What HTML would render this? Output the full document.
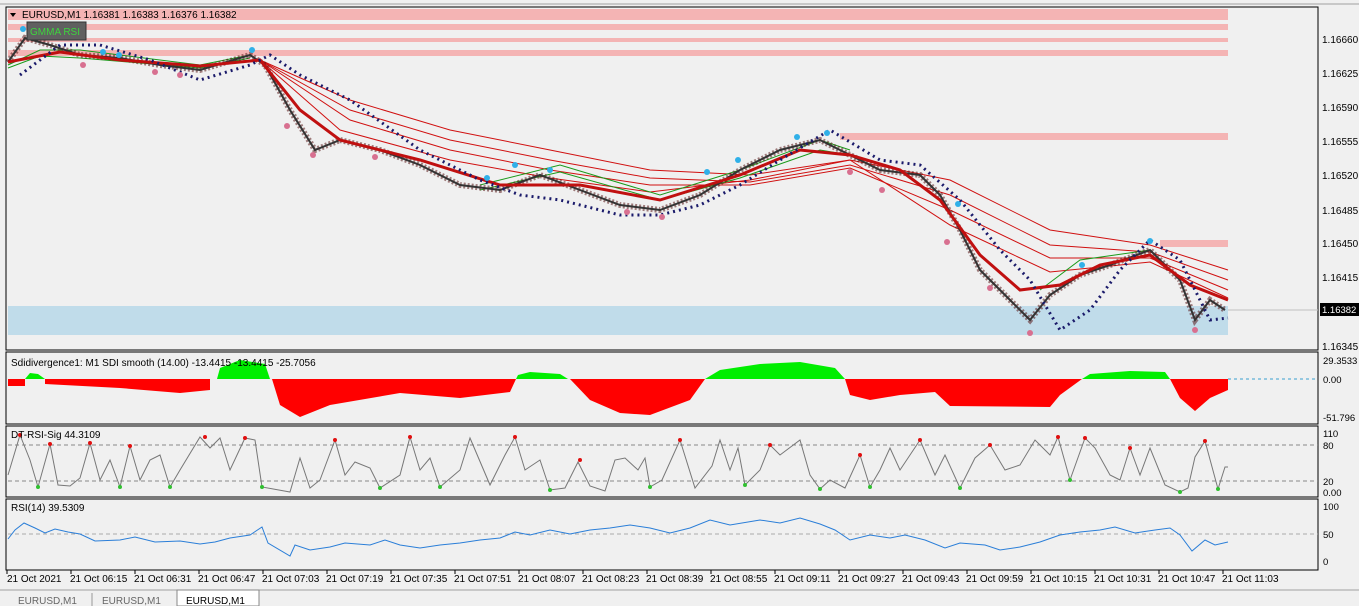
<!DOCTYPE html>
<html><head><meta charset="utf-8"><style>
body{margin:0;width:1359px;height:606px;overflow:hidden;background:#f0f0f0;font-family:"Liberation Sans",sans-serif}
svg{position:absolute;left:0;top:0}
text{font-family:"Liberation Sans",sans-serif;font-size:10px;fill:#000}
</style></head><body>
<svg width="1359" height="606" viewBox="0 0 1359 606">
<rect x="0" y="0" width="1359" height="606" fill="#f0f0f0"/>
<line x1="0" y1="4" x2="1359" y2="4" stroke="#a0a0a0"/>
<!-- main pane -->
<rect x="6" y="7" width="1312" height="343" fill="#f0f0f0" stroke="#000"/>
<rect x="8" y="9" width="1220" height="11" fill="#f4b4b4"/>
<rect x="8" y="24" width="1220" height="6" fill="#f4b4b4"/>
<rect x="8" y="38" width="1220" height="4" fill="#f4b4b4"/>
<rect x="8" y="50" width="1220" height="6" fill="#f4b4b4"/>
<rect x="840" y="133" width="388" height="7" fill="#f4b4b4"/>
<rect x="1160" y="240" width="68" height="7" fill="#f4b4b4"/>
<rect x="8" y="306" width="1220" height="29" fill="#c0dcea"/>
<line x1="1228" y1="310" x2="1318" y2="310" stroke="#c0c0c0"/>
<!-- band lines -->
<g fill="none" stroke="#d01010" stroke-width="1">
<polyline points="260,60 350,100 450,130 550,150 650,170 750,175 850,160 950,180 1050,230 1150,245 1228,270"/>
<polyline points="260,60 350,110 450,140 550,160 650,178 750,182 850,165 950,195 1050,245 1150,252 1228,280"/>
<polyline points="260,60 350,120 450,150 550,170 650,185 750,185 850,168 950,210 1050,258 1150,258 1228,290"/>
<polyline points="260,60 340,130 450,160 550,178 650,192 750,180 850,160 950,225 1050,272 1150,262 1228,298"/>
</g>
<g fill="none" stroke="#1a9a1a" stroke-width="1">
<polyline points="8,65 40,50 80,50 200,65 250,55"/>
<polyline points="8,68 40,56 80,58 200,68 250,58"/>
<polyline points="480,185 560,165 660,195 740,170 820,140 850,150"/>
<polyline points="480,190 560,172 660,200 740,178 820,150 850,155"/>
<polyline points="1040,290 1080,260 1150,250"/>
</g>
<polyline fill="none" stroke="#5a1a1a" stroke-width="6" stroke-dasharray="2,2" opacity="0.55" points="8,62 25,38 50,45 80,55 120,58 160,65 200,70 250,55 265,65 290,110 315,150 340,140 380,150 420,165 460,185 500,190 540,175 580,190 620,205 660,210 700,195 740,170 780,150 820,140 850,155 880,170 920,175 940,195 960,230 980,270 1010,300 1030,320 1050,295 1080,275 1110,265 1150,250 1180,280 1195,320 1210,300 1225,310"/>
<polyline fill="none" stroke="#333" stroke-width="2" points="8,62 25,38 50,45 80,55 120,58 160,65 200,70 250,55 265,65 290,110 315,150 340,140 380,150 420,165 460,185 500,190 540,175 580,190 620,205 660,210 700,195 740,170 780,150 820,140 850,155 880,170 920,175 940,195 960,230 980,270 1010,300 1030,320 1050,295 1080,275 1110,265 1150,250 1180,280 1195,320 1210,300 1225,310"/>
<polyline fill="none" stroke="#c01010" stroke-width="3" points="8,62 60,52 120,60 200,66 260,60 300,110 340,140 420,160 500,185 580,185 660,200 740,175 800,150 850,155 900,170 940,200 980,255 1020,290 1060,285 1100,265 1150,255 1190,285 1228,300"/>
<polyline fill="none" stroke="#1a1a6a" stroke-width="3" stroke-dasharray="2,4" points="20,75 60,45 100,45 150,60 200,80 250,65 270,55 300,75 350,100 420,150 480,180 520,195 560,200 620,215 660,215 700,205 740,185 780,160 830,130 880,160 920,165 960,200 1000,250 1030,280 1060,330 1090,310 1120,270 1150,240 1180,260 1210,320 1228,318"/>
<g fill="#30b0e8"><circle cx="23" cy="29" r="3"/><circle cx="103" cy="52" r="3"/><circle cx="119" cy="55" r="3"/><circle cx="252" cy="50" r="3"/><circle cx="487" cy="178" r="3"/><circle cx="515" cy="165" r="3"/><circle cx="550" cy="170" r="3"/><circle cx="707" cy="172" r="3"/><circle cx="738" cy="160" r="3"/><circle cx="797" cy="137" r="3"/><circle cx="827" cy="133" r="3"/><circle cx="958" cy="204" r="3"/><circle cx="1082" cy="265" r="3"/><circle cx="1150" cy="241" r="3"/></g>
<g fill="#d87090"><circle cx="83" cy="65" r="3"/><circle cx="155" cy="72" r="3"/><circle cx="180" cy="75" r="3"/><circle cx="287" cy="126" r="3"/><circle cx="313" cy="155" r="3"/><circle cx="375" cy="157" r="3"/><circle cx="627" cy="212" r="3"/><circle cx="662" cy="217" r="3"/><circle cx="850" cy="172" r="3"/><circle cx="882" cy="190" r="3"/><circle cx="947" cy="242" r="3"/><circle cx="990" cy="288" r="3"/><circle cx="1030" cy="333" r="3"/><circle cx="1195" cy="330" r="3"/></g>
<polygon points="10,13 16,13 13,17" fill="#000"/>
<text x="22" y="18" font-size="10">EURUSD,M1  1.16381 1.16383 1.16376 1.16382</text>
<rect x="27" y="22" width="59" height="18" fill="#606060" stroke="#333"/>
<text x="30" y="35" font-size="11" style="fill:#3ed43e">GMMA RSI</text>
<!-- price axis -->
<g style="font-size:9.5px">
<text x="1322" y="43">1.16660</text><text x="1322" y="77">1.16625</text><text x="1322" y="111">1.16590</text><text x="1322" y="145">1.16555</text><text x="1322" y="179">1.16520</text><text x="1322" y="214">1.16485</text><text x="1322" y="247">1.16450</text><text x="1322" y="281">1.16415</text><text x="1322" y="350">1.16345</text>
</g>
<rect x="1320" y="303" width="39" height="13" fill="#000"/>
<text x="1322" y="313" style="fill:#fff;font-size:9.5px">1.16382</text>
<!-- SDI pane -->
<rect x="6" y="352" width="1312" height="72" fill="#f0f0f0" stroke="#000"/>
<line x1="1228" y1="379" x2="1318" y2="379" stroke="#3aa0d0" stroke-dasharray="3,3"/>
<g fill="#ff0000">
<polygon points="8,379 25,379 25,386 8,386"/>
<polygon points="45,379 210,379 210,390 180,393 120,388 45,384"/>
<polygon points="272,379 516,379 510,392 460,398 400,393 330,405 300,417 280,405"/>
<polygon points="570,379 705,379 690,400 650,415 620,413 590,400"/>
<polygon points="845,379 1082,379 1060,395 1050,407 950,406 935,392 900,395 870,400 850,395"/>
<polygon points="1170,379 1228,379 1228,390 1210,398 1195,411 1180,398"/>
</g>
<g fill="#00ee00">
<polygon points="25,379 45,379 38,374 30,373"/>
<polygon points="217,379 270,379 265,364 240,360 220,368"/>
<polygon points="516,379 568,379 560,374 530,372 518,375"/>
<polygon points="705,379 845,379 835,368 800,362 760,364 720,370"/>
<polygon points="1082,379 1170,379 1165,372 1130,371 1090,374"/>
</g>
<text x="11" y="366">Sdidivergence1:  M1   SDI smooth (14.00) -13.4415 -13.4415 -25.7056</text>
<text x="1323" y="364" style="font-size:9.5px">29.3533</text><text x="1323" y="383" style="font-size:9.5px">0.00</text><text x="1323" y="421" style="font-size:9.5px">-51.796</text>
<!-- DT RSI -->
<rect x="6" y="426" width="1312" height="71" fill="#f0f0f0" stroke="#000"/>
<line x1="8" y1="445" x2="1318" y2="445" stroke="#888" stroke-dasharray="4,3"/>
<line x1="8" y1="481" x2="1318" y2="481" stroke="#888" stroke-dasharray="4,3"/>
<polyline fill="none" stroke="#777" points="8,475 20,435 30,460 38,487 50,444 58,485 70,486 80,478 90,443 100,480 110,460 120,487 130,446 140,480 150,460 160,455 170,487 180,470 200,437 210,448 220,438 230,470 245,438 255,440 262,487 290,492 300,458 310,488 320,480 335,440 345,475 355,462 370,468 380,488 400,475 410,437 420,470 430,458 440,487 460,470 470,438 490,485 505,455 515,437 525,470 540,460 550,490 565,488 578,462 590,486 605,491 615,460 625,458 638,470 645,458 650,487 662,480 680,440 695,488 712,466 720,440 730,470 738,448 745,485 760,470 770,445 780,455 800,440 810,475 820,489 830,480 845,488 860,455 870,487 880,470 890,448 900,470 920,440 935,475 945,455 960,488 975,458 990,445 1005,470 1020,465 1035,440 1050,455 1058,437 1070,480 1085,438 1095,448 1110,475 1120,480 1130,448 1140,475 1150,448 1165,485 1180,492 1188,488 1195,457 1205,441 1218,489 1225,467 1228,467"/>
<g fill="#e01010"><circle cx="20" cy="435" r="2"/><circle cx="50" cy="444" r="2"/><circle cx="90" cy="443" r="2"/><circle cx="130" cy="446" r="2"/><circle cx="205" cy="437" r="2"/><circle cx="245" cy="438" r="2"/><circle cx="335" cy="440" r="2"/><circle cx="410" cy="437" r="2"/><circle cx="515" cy="437" r="2"/><circle cx="580" cy="460" r="2"/><circle cx="680" cy="440" r="2"/><circle cx="770" cy="445" r="2"/><circle cx="860" cy="455" r="2"/><circle cx="920" cy="440" r="2"/><circle cx="990" cy="445" r="2"/><circle cx="1058" cy="437" r="2"/><circle cx="1085" cy="438" r="2"/><circle cx="1130" cy="448" r="2"/><circle cx="1205" cy="441" r="2"/></g>
<g fill="#30c030"><circle cx="38" cy="487" r="2"/><circle cx="120" cy="487" r="2"/><circle cx="170" cy="487" r="2"/><circle cx="262" cy="487" r="2"/><circle cx="380" cy="488" r="2"/><circle cx="440" cy="487" r="2"/><circle cx="550" cy="490" r="2"/><circle cx="650" cy="487" r="2"/><circle cx="745" cy="485" r="2"/><circle cx="820" cy="489" r="2"/><circle cx="870" cy="487" r="2"/><circle cx="960" cy="488" r="2"/><circle cx="1070" cy="480" r="2"/><circle cx="1180" cy="492" r="2"/><circle cx="1218" cy="489" r="2"/></g>
<text x="11" y="438">DT-RSI-Sig 44.3109</text>
<text x="1323" y="437" style="font-size:9.5px">110</text><text x="1323" y="449" style="font-size:9.5px">80</text><text x="1323" y="485" style="font-size:9.5px">20</text><text x="1323" y="496" style="font-size:9.5px">0.00</text>
<!-- RSI -->
<rect x="6" y="499" width="1312" height="71" fill="#f0f0f0" stroke="#000"/>
<line x1="8" y1="534" x2="1318" y2="534" stroke="#aaa" stroke-dasharray="4,3"/>
<polyline fill="none" stroke="#2a7ed8" points="8,539 15,530 24,523 35,528 45,533 55,529 68,532 80,534 95,541 120,540 135,537 155,542 180,541 200,544 215,542 230,538 250,535 262,527 268,543 290,556 295,545 310,550 330,547 345,543 370,545 385,540 400,545 420,548 440,545 460,543 480,540 500,538 515,532 530,535 550,530 570,534 590,530 610,528 630,525 650,528 670,533 690,528 710,520 730,525 760,520 780,523 800,518 820,524 835,530 850,540 870,535 890,538 905,535 925,540 945,548 960,543 985,545 1000,550 1020,547 1040,542 1060,535 1080,532 1100,530 1115,527 1135,533 1155,530 1170,528 1180,535 1192,551 1205,540 1215,545 1228,542"/>
<text x="11" y="511">RSI(14) 39.5309</text>
<text x="1323" y="510" style="font-size:9.5px">100</text><text x="1323" y="538" style="font-size:9.5px">50</text><text x="1323" y="565" style="font-size:9.5px">0</text>
<!-- time axis -->
<g stroke="#000"><line x1="7" y1="570" x2="7" y2="574"/><line x1="71" y1="570" x2="71" y2="574"/><line x1="135" y1="570" x2="135" y2="574"/><line x1="199" y1="570" x2="199" y2="574"/><line x1="263" y1="570" x2="263" y2="574"/><line x1="327" y1="570" x2="327" y2="574"/><line x1="391" y1="570" x2="391" y2="574"/><line x1="455" y1="570" x2="455" y2="574"/><line x1="519" y1="570" x2="519" y2="574"/><line x1="583" y1="570" x2="583" y2="574"/><line x1="647" y1="570" x2="647" y2="574"/><line x1="711" y1="570" x2="711" y2="574"/><line x1="775" y1="570" x2="775" y2="574"/><line x1="839" y1="570" x2="839" y2="574"/><line x1="903" y1="570" x2="903" y2="574"/><line x1="967" y1="570" x2="967" y2="574"/><line x1="1031" y1="570" x2="1031" y2="574"/><line x1="1095" y1="570" x2="1095" y2="574"/><line x1="1159" y1="570" x2="1159" y2="574"/><line x1="1223" y1="570" x2="1223" y2="574"/></g>
<g font-size="10">
<text x="7" y="582">21 Oct 2021</text><text x="70" y="582">21 Oct 06:15</text><text x="134" y="582">21 Oct 06:31</text><text x="198" y="582">21 Oct 06:47</text><text x="262" y="582">21 Oct 07:03</text><text x="326" y="582">21 Oct 07:19</text><text x="390" y="582">21 Oct 07:35</text><text x="454" y="582">21 Oct 07:51</text><text x="518" y="582">21 Oct 08:07</text><text x="582" y="582">21 Oct 08:23</text><text x="646" y="582">21 Oct 08:39</text><text x="710" y="582">21 Oct 08:55</text><text x="774" y="582">21 Oct 09:11</text><text x="838" y="582">21 Oct 09:27</text><text x="902" y="582">21 Oct 09:43</text><text x="966" y="582">21 Oct 09:59</text><text x="1030" y="582">21 Oct 10:15</text><text x="1094" y="582">21 Oct 10:31</text><text x="1158" y="582">21 Oct 10:47</text><text x="1222" y="582">21 Oct 11:03</text>
</g>
<!-- tabs -->
<line x1="0" y1="590" x2="1359" y2="590" stroke="#a0a0a0"/>
<text x="18" y="604" style="fill:#666">EURUSD,M1</text>
<line x1="92" y1="593" x2="92" y2="606" stroke="#999"/>
<text x="102" y="604" style="fill:#666">EURUSD,M1</text>
<rect x="177" y="590" width="82" height="16" fill="#fff" stroke="#888"/>
<text x="186" y="604">EURUSD,M1</text>
</svg>
</body></html>
